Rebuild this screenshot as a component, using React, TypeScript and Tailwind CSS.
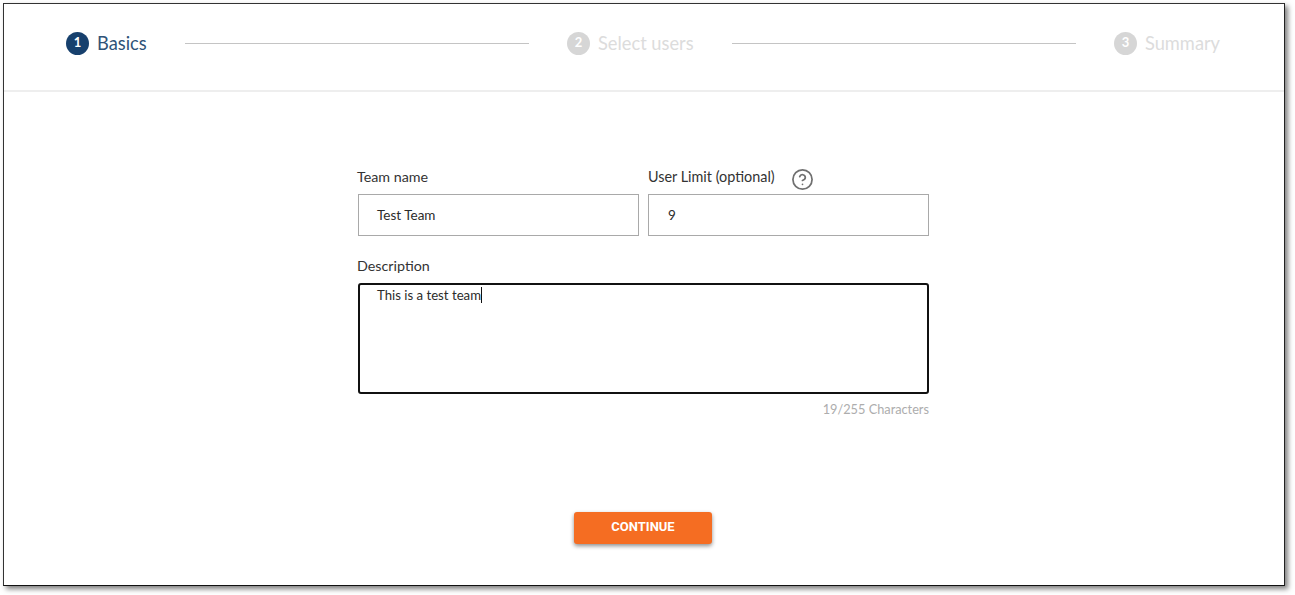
import { CircleHelp } from "lucide-react";

const Step = ({ n, label, active }: { n: number; label: string; active?: boolean }) => (
  <div className="flex items-center gap-[8px] shrink-0">
    <span
      className={`flex h-[23px] w-[23px] items-center justify-center rounded-full text-[13px] font-bold text-white ${
        active ? "bg-[#17406d]" : "bg-[#d6d6d6]"
      }`}
    >
      {n}
    </span>
    <span className={`text-[18.25px] leading-none ${active ? "text-[#2f5378]" : "text-[#dcdcdc]"}`}>{label}</span>
  </div>
);

const Line = () => <div className="h-px flex-1 bg-[#c4c4c4]" />;

export default function App() {
  return (
    <div className="h-[595px] w-[1295px] bg-white pl-[3px] pt-[3px] font-['Lato','Noto_Sans',sans-serif]">
      <div className="h-[583px] w-[1282px] border border-[#333333] border-b-[#111111] border-r-[#222222] bg-white shadow-[3px_3px_5px_rgba(0,0,0,0.5)]">
        <div className="flex h-[88px] items-center gap-[38px] border-b-2 border-[#eeeeee] pb-[8px] pl-[62px] pr-[64px]">
          <Step n={1} label="Basics" active />
          <Line />
          <Step n={2} label="Select users" />
          <Line />
          <Step n={3} label="Summary" />
        </div>

        <div className="ml-[354px] mt-[75px] flex w-[571px] flex-col">
          <div className="grid grid-cols-2 gap-[9px]">
            <div>
              <div className="-ml-px mb-[7px] flex h-[20px] items-center text-[14.3px] text-[#333333]">Team name</div>
              <div className="flex h-[42px] items-center border border-[#a9a9a9] pl-[18px] text-[13.5px] text-[#2b2b2b]">
                Test Team
              </div>
            </div>
            <div>
              <div className="mb-[7px] flex h-[20px] items-center text-[14.4px] text-[#333333]">
                User Limit (optional)
                <CircleHelp size={23} strokeWidth={1.8} className="ml-[16px] mt-[5px] text-[#707070]" />
              </div>
              <div className="flex h-[42px] items-center border border-[#a9a9a9] pl-[19px] text-[13.5px] text-[#2b2b2b]">
                9
              </div>
            </div>
          </div>

          <div className="-ml-px mb-[7px] mt-[20px] flex h-[20px] items-center text-[14.3px] text-[#333333]">Description</div>
          <div className="h-[111px] rounded-[3px] border-2 border-[#111111] pl-[17px] pt-[1px] text-[13.2px] leading-[18px] text-[#2b2b2b]">
            <span className="border-r border-[#111111]">This is a test team</span>
          </div>
          <div className="mt-[6px] text-right text-[12.75px] font-normal leading-[18px] text-[#adadad]">19/255 Characters</div>
        </div>

        <div className="ml-[570px] mt-[94px]">
          <button className="h-[32px] w-[138px] rounded-[3px] bg-[#f56d22] pb-[2px] font-['Roboto',sans-serif] text-[13px] font-bold text-white shadow-[0_2px_4px_rgba(0,0,0,0.45)]">
            CONTINUE
          </button>
        </div>
      </div>
    </div>
  );
}
